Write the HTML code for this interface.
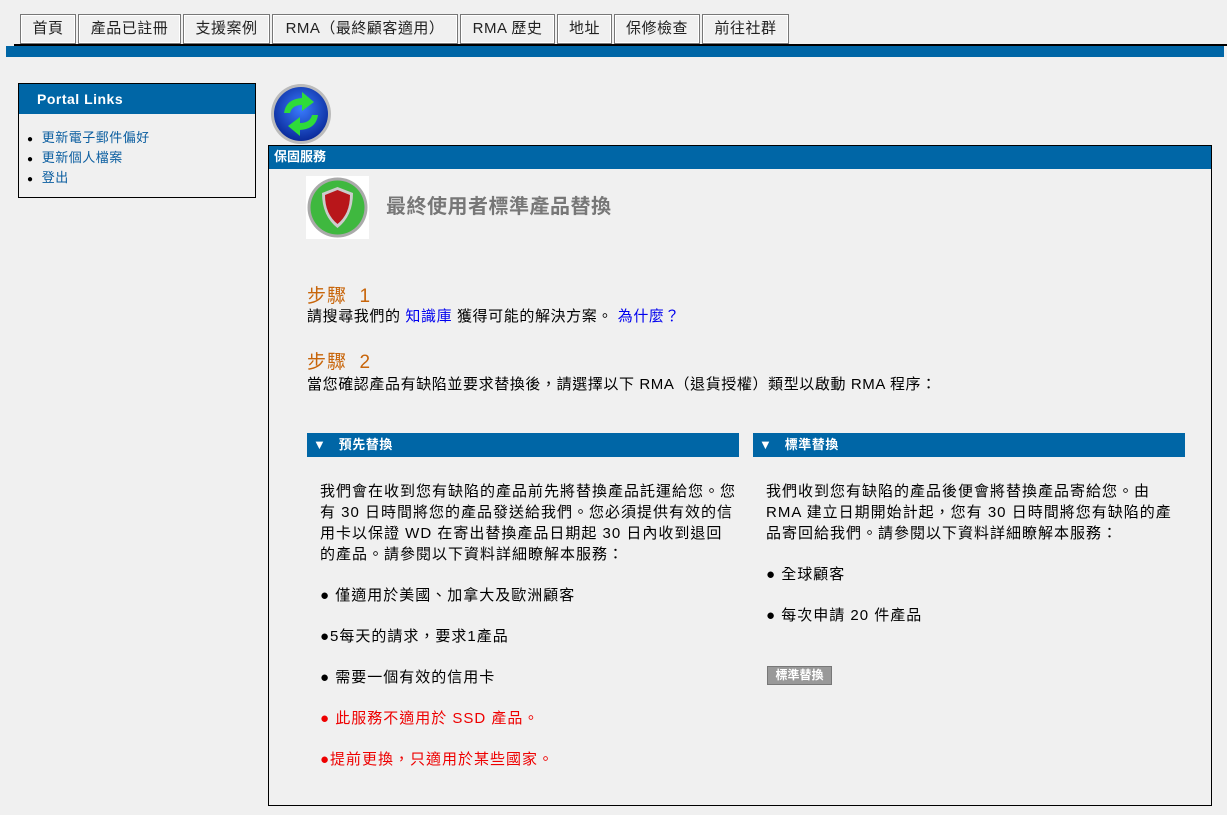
<!DOCTYPE html>
<html><head><meta charset="utf-8"><style>
*{margin:0;padding:0;box-sizing:border-box}
body{width:1227px;height:815px;background:#f0f0f0;font-family:"Liberation Sans","Noto Sans CJK TC",sans-serif;font-size:15px;letter-spacing:1px;color:#000;position:relative;overflow:hidden}
.abs{position:absolute}
.tab{position:absolute;top:14px;height:30px;border:1px solid #777;box-shadow:inset 0 0 0 1px #fff;background:#f0f0f0;font-size:15px;letter-spacing:0.5px;line-height:28px;text-align:center;color:#222}
.blue{background:#0066a6}
a{color:#0000ee;text-decoration:none}
</style></head><body>
<div class="tab" style="left:20px;width:56px">首頁</div>
<div class="tab" style="left:78px;width:103px">產品已註冊</div>
<div class="tab" style="left:183px;width:87px">支援案例</div>
<div class="tab" style="left:272px;width:186px">RMA（最終顧客適用）</div>
<div class="tab" style="left:460px;width:95px">RMA 歷史</div>
<div class="tab" style="left:557px;width:55px">地址</div>
<div class="tab" style="left:614px;width:86px">保修檢查</div>
<div class="tab" style="left:702px;width:87px">前往社群</div>
<div class="abs" style="left:14px;top:44px;width:1213px;height:2px;background:#000"></div>
<div class="abs blue" style="left:6px;top:46px;width:1218px;height:11px"></div>

<div class="abs" style="left:18px;top:83px;width:238px;height:115px;border:1px solid #000;letter-spacing:0.5px">
<div class="blue" style="height:30px;color:#fff;font-weight:bold;font-size:14px;line-height:30px;padding-left:18px">Portal Links</div>
<div style="padding:15px 0 0 8px;font-size:13px;line-height:18px;color:#0b5ea0">
<div><span style="color:#000;font-size:10px">●</span>&nbsp; 更新電子郵件偏好</div>
<div><span style="color:#000;font-size:10px">●</span>&nbsp; 更新個人檔案</div>
<div><span style="color:#000;font-size:10px">●</span>&nbsp; 登出</div>
</div></div>

<svg class="abs" style="left:270px;top:83px" width="62" height="62" viewBox="0 0 62 62">
<defs><radialGradient id="g1" cx="50%" cy="40%" r="60%"><stop offset="0" stop-color="#3a7cff"/><stop offset="1" stop-color="#0a2a9a"/></radialGradient></defs>
<circle cx="31" cy="31" r="30" fill="#bbb"/><circle cx="31" cy="31" r="27" fill="url(#g1)"/>
<path d="M14 30 Q16 16 32 15 L32 9 L44 19 L32 28 L32 22 Q22 22 20 30Z" fill="#2edb3a"/>
<path d="M48 32 Q46 46 30 47 L30 53 L18 43 L30 34 L30 40 Q40 40 42 32Z" fill="#2edb3a"/>
</svg>

<div class="abs" style="left:268px;top:145px;width:944px;height:661px;border:1px solid #000">
<div class="blue" style="height:23px;color:#fff;font-weight:bold;font-size:13px;letter-spacing:0;line-height:21px;padding-left:5px">保固服務</div>
<div class="abs" style="left:37px;top:30px;width:63px;height:63px;background:#fff">
<svg width="63" height="63" viewBox="0 0 63 63"><circle cx="31.5" cy="31.5" r="30" fill="#aaa"/><circle cx="31.5" cy="31.5" r="27" fill="#3fb83f"/>
<path d="M31.5 11 L47 17 Q47 40 31.5 52 Q16 40 16 17Z" fill="#ccc"/><path d="M31.5 14 L44 19 Q44 38 31.5 48 Q19 38 19 19Z" fill="#b8161a"/></svg></div>
<div class="abs" style="left:117px;top:44px;font-size:20px;letter-spacing:0.5px;font-weight:bold;color:#777">最終使用者標準產品替換</div>
<div class="abs" style="left:38px;top:135px;font-size:19px;color:#c8650a">步驟&nbsp; 1</div>
<div class="abs" style="left:38px;top:159px;letter-spacing:0.6px">請搜尋我們的 <a>知識庫</a> 獲得可能的解決方案。 <a>為什麼？</a></div>
<div class="abs" style="left:38px;top:201px;font-size:19px;color:#c8650a">步驟&nbsp; 2</div>
<div class="abs" style="left:38px;top:227px;letter-spacing:0.6px">當您確認產品有缺陷並要求替換後，請選擇以下 RMA（退貨授權）類型以啟動 RMA 程序：</div>

<div class="abs blue" style="left:38px;top:287px;width:432px;height:24px;color:#fff;font-weight:bold;font-size:13px;letter-spacing:0.5px;line-height:24px;padding-left:6px">▼&nbsp;&nbsp; 預先替換</div>
<div class="abs blue" style="left:484px;top:287px;width:432px;height:24px;color:#fff;font-weight:bold;font-size:13px;letter-spacing:0.5px;line-height:24px;padding-left:6px">▼&nbsp;&nbsp; 標準替換</div>

<div class="abs" style="left:51px;top:335px;white-space:nowrap;line-height:21px">我們會在收到您有缺陷的產品前先將替換產品託運給您。您<br>有 30 日時間將您的產品發送給我們。您必須提供有效的信<br>用卡以保證 WD 在寄出替換產品日期起 30 日內收到退回<br>的產品。請參閱以下資料詳細瞭解本服務：</div>
<div class="abs" style="left:51px;top:438px">● 僅適用於美國、加拿大及歐洲顧客</div>
<div class="abs" style="left:51px;top:479px">●5每天的請求，要求1產品</div>
<div class="abs" style="left:51px;top:520px">● 需要一個有效的信用卡</div>
<div class="abs" style="left:51px;top:561px;color:#e00">● 此服務不適用於 SSD 產品。</div>
<div class="abs" style="left:51px;top:602px;color:#e00">●提前更換，只適用於某些國家。</div>

<div class="abs" style="left:497px;top:335px;white-space:nowrap;line-height:21px">我們收到您有缺陷的產品後便會將替換產品寄給您。由<br>RMA 建立日期開始計起，您有 30 日時間將您有缺陷的產<br>品寄回給我們。請參閱以下資料詳細瞭解本服務：</div>
<div class="abs" style="left:497px;top:417px">● 全球顧客</div>
<div class="abs" style="left:497px;top:458px">● 每次申請 20 件產品</div>
<div class="abs" style="left:498px;top:520px;width:65px;height:19px;background:#999;border:1px solid #777;color:#fff;font-weight:bold;font-size:12px;letter-spacing:0;line-height:17px;text-align:center">標準替換</div>
</div>
</body></html>
